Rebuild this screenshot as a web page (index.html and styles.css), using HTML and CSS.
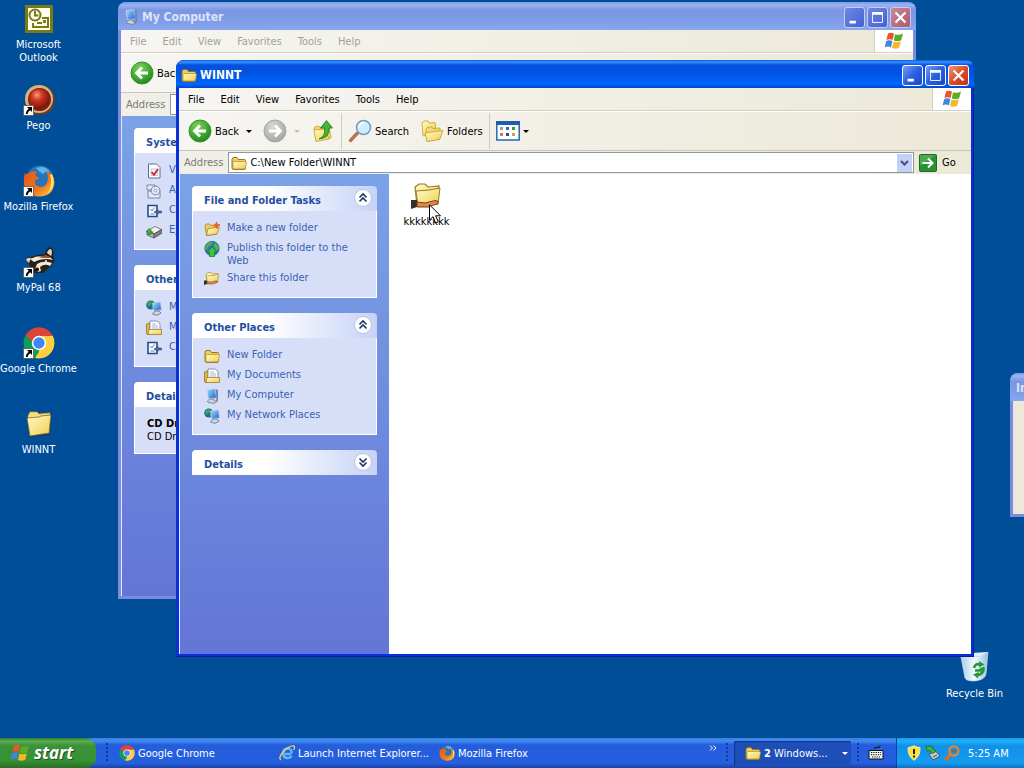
FILE: index.html
```html
<!DOCTYPE html>
<html lang="en">
<head>
    <meta charset="UTF-8">
    <meta name="viewport" content="width=device-width, initial-scale=1.0">
    <title>Desktop</title>
    <link rel="stylesheet" href="styles.css">
</head>
<body>
    <!-- Shared icons -->
    <svg class="defs" aria-hidden="true">
        <defs>
            <linearGradient id="g-folder" x1="0" y1="0" x2="1" y2="1">
                <stop offset="0" stop-color="#fffbc4"/><stop offset="1" stop-color="#f2cd52"/>
            </linearGradient>
            <radialGradient id="g-green" cx=".4" cy=".3" r=".7">
                <stop offset="0" stop-color="#7fd85a"/><stop offset="1" stop-color="#1f8a1a"/>
            </radialGradient>
            <radialGradient id="g-gray" cx=".4" cy=".3" r=".7">
                <stop offset="0" stop-color="#d8d8d6"/><stop offset="1" stop-color="#a5a5a3"/>
            </radialGradient>
            <radialGradient id="g-red" cx=".4" cy=".3" r=".7">
                <stop offset="0" stop-color="#f59a82"/><stop offset=".4" stop-color="#cf3420"/><stop offset="1" stop-color="#7a140c"/>
            </radialGradient>
            <linearGradient id="g-screen" x1="0" y1="0" x2="1" y2="1">
                <stop offset="0" stop-color="#a6dcff"/><stop offset="1" stop-color="#1668cc"/>
            </linearGradient>
            <linearGradient id="g-fox" x1="0" y1="0" x2="1" y2="1">
                <stop offset="0" stop-color="#e2541b"/><stop offset=".6" stop-color="#f0791c"/><stop offset="1" stop-color="#ffd84a"/>
            </linearGradient>
            <linearGradient id="g-bin" x1="0" y1="0" x2="1" y2="0">
                <stop offset="0" stop-color="#a9cdea"/><stop offset=".5" stop-color="#f4faff"/><stop offset="1" stop-color="#9bbfe0"/>
            </linearGradient>
        </defs>
        <symbol id="folder" viewBox="0 0 16 16">
            <path d="M1 4.5Q1 2.500 3 2.500H6L7.500 4.500H13.500Q14.500 4.500 14.500 5.500V13Q14.500 14.500 13 14.500H3Q1 14.500 1 13Z" fill="#f0d05c" stroke="#97721a"/>
            <path d="M2 7.500Q2 6.500 3 6.500H14.500Q15.500 6.500 15.500 7.500L14.500 13Q14.300 14 13 14H3Q2 14 2 13Z" fill="url(#g-folder)" stroke="#b58a22" stroke-width=".7"/>
        </symbol>
        <symbol id="folder-big" viewBox="0 0 32 32">
            <path d="M7 7L9 4L16 3L18 6L29 5L27 27L8 29Z" fill="#222" opacity=".35"/>
            <path d="M5 8L7 4L14 4L16 6L27 5L26 25L7 27Z" fill="#f5dc80" stroke="#c9a238" stroke-width=".7"/>
            <path d="M4 10L16 9L18 8L28 7L26 25L7 28Z" fill="url(#g-folder)" stroke="#6d5a20" stroke-width=".7"/>
        </symbol>
        <symbol id="hand" viewBox="0 0 16 16">
            <path d="M0 9.500L3 9.500L3 13L0 14Z" fill="#33302e"/>
            <path d="M3 10.500L7 11L12 9.800Q14.500 10 13 11.400L9 13L3 13Z" fill="#e08a4a" stroke="#7b3f18" stroke-width=".5"/>
        </symbol>
        <symbol id="shared" viewBox="0 0 16 16">
            <path d="M2 3L4 1.500H7L8.500 3L14 2.500L13.500 11.500L3 12Z" fill="url(#g-folder)" stroke="#9c7a22" stroke-width=".6"/>
            <path d="M2.500 5L9 4.500L14.500 3.500L13.500 11.500L3.500 12.500Z" fill="url(#g-folder)" stroke="#9c7a22" stroke-width=".5"/>
            <use href="#hand"/>
        </symbol>
        <symbol id="new-folder" viewBox="0 0 16 16">
            <path d="M1 5L2 3H6L7 4.500L12 4L13 13L2.500 14.500Z" fill="#f1cd5d" stroke="#a2761f" stroke-width=".7"/>
            <path d="M4 7.500L15.500 6L13 13L2.500 14.500Z" fill="url(#g-folder)" stroke="#a2761f" stroke-width=".7"/>
            <path d="M12.500 1L13.300 3.400L16 4L13.600 5L13 7.600L11.800 5.200L9 4.600L11.600 3.500Z" fill="#e8622a" stroke="#e8622a"/>
        </symbol>
        <symbol id="globe" viewBox="0 0 16 16">
            <circle cx="8" cy="7.500" r="7.200" fill="#2a77b8" stroke="#1b4f7c" stroke-width=".6"/>
            <path d="M2 4Q5 0 9 1L7 4L4 6L3 9L1 8ZM10 2Q14 3 15 7L13 10L10 6Z" fill="#53b04b"/>
            <path d="M8 6L13 11H10.500V15.500H5.500V11H3Z" fill="#3cc43a" stroke="#157a1a" stroke-width=".7"/>
        </symbol>
        <symbol id="documents" viewBox="0 0 16 16">
            <path d="M.5 4L4 3V14.500H2Q.5 14.500.5 13Z" fill="#e6b93f" stroke="#96711a" stroke-width=".8"/>
            <path d="M4 1H11L14 3.500V11H4Z" fill="#fff" stroke="#6f7ea8" stroke-width=".8"/>
            <path d="M6 4H10M6 6H12M6 8H12" stroke="#93a4cc" stroke-width=".8"/>
            <path d="M3 9.500H15.500V14.500H2Z" fill="url(#g-folder)" stroke="#96711a" stroke-width=".7"/>
        </symbol>
        <symbol id="computer" viewBox="0 0 16 16">
            <path d="M3 1.500L11 .8L12.600 10L4.400 10.600Z" fill="url(#g-screen)" stroke="#c9d6ea" stroke-width=".8"/>
            <path d="M11.500 1L14 2V13L12.600 14Z" fill="#6f86b4"/>
            <path d="M6 11H10V12.500L13 13.400L10 15.400L4 14.400L3.400 13Z" fill="#cdd3df" stroke="#5b6880" stroke-width=".7"/>
        </symbol>
        <symbol id="network" viewBox="0 0 16 16">
            <circle cx="4.800" cy="5" r="4.600" fill="#1d66b0"/>
            <path d="M1 3Q4 0 7 2L5 5L2 7ZM5 7L8 5V9Z" fill="#3cab38"/>
            <path d="M6.500 3L14.500 2L15.400 10L7.600 10.800Z" fill="url(#g-screen)" stroke="#b9c8e2" stroke-width=".8"/>
            <path d="M9 11L13 11L15 13L11 15.400L6.500 14Z" fill="#cfd5e0" stroke="#54627c" stroke-width=".7"/>
        </symbol>
        <symbol id="checklist" viewBox="0 0 16 16">
            <path d="M2.500 1H10.500L14 4.500V15H2.500Z" fill="#fff" stroke="#5c6c92"/>
            <path d="M5 6H11.500V12.500H5Z" fill="#f2f4fa" stroke="#a9b4cf" stroke-width=".7"/>
            <path d="M5.500 9L8 11.800L12 6" fill="none" stroke="#d8222c" stroke-width="1.800"/>
        </symbol>
        <symbol id="programs" viewBox="0 0 16 16">
            <path d="M1 2H9V7H1ZM2 8H14V15H2Z" fill="#e4e9f2" stroke="#6f7e9a" stroke-width=".9"/>
            <circle cx="9.500" cy="7.500" r="4.400" fill="#dfe8f5" stroke="#6f84ac"/>
            <circle cx="9.500" cy="7.500" r="1.300" fill="#fff" stroke="#6f84ac" stroke-width=".7"/>
        </symbol>
        <symbol id="settings" viewBox="0 0 16 16">
            <path d="M2 2.500H11V13.500H2Z" fill="#f5f8ff" stroke="#254b85" stroke-width="1.600"/>
            <path d="M4 6L6 8L8.500 4.500M4.500 11H8.500" fill="none" stroke="#5f86bd"/>
            <path d="M8 9L12 6.500V8H15.500V10H12V11.500Z" fill="#4a6b9c" stroke="#223b62" stroke-width=".5"/>
        </symbol>
        <symbol id="drive" viewBox="0 0 16 16">
            <path d="M1 8L9 3.500L15.500 6.500L8 11Z" fill="#f0f0ee" stroke="#555" stroke-width=".7"/>
            <path d="M1 8L8 11V15L1 12Z" fill="#b9bab8" stroke="#444" stroke-width=".7"/>
            <path d="M8 11L15.500 6.500V10.500L8 15Z" fill="#7f8180" stroke="#444" stroke-width=".7"/>
            <path d="M0 8.600L3.500 5.500L7 9.500H5V11.500H2V9Z" fill="#3fb53a" stroke="#14701a" stroke-width=".6"/>
        </symbol>
        <symbol id="back" viewBox="0 0 24 24">
            <circle cx="12" cy="12" r="11" fill="url(#g-green)" stroke="#3a8f30"/>
            <path d="M18 12H7M12 6.500L6.500 12L12 17.500" fill="none" stroke="#fff" stroke-width="2.800"/>
        </symbol>
        <symbol id="forward" viewBox="0 0 24 24">
            <circle cx="12" cy="12" r="11" fill="url(#g-gray)" stroke="#a6a6a4"/>
            <path d="M6 12H17M12 6.500L17.500 12L12 17.500" fill="none" stroke="#fff" stroke-width="2.800"/>
        </symbol>
        <symbol id="up" viewBox="0 0 24 24">
            <path d="M3 9L5 7L9 8L10 10L18 6L20 19L5 22Z" fill="#f0d670" stroke="#c9a12c" stroke-width=".8"/>
            <path d="M3 11L14 10L18 20L5 22.500Z" fill="url(#g-folder)" stroke="#c9a12c" stroke-width=".8"/>
            <path d="M8 20Q15 17 13.500 9H9.500L15.500 1.500L21.500 9H18Q19 19 8 20Z" fill="#45b436" stroke="#1c7a1a" stroke-width=".8"/>
        </symbol>
        <symbol id="search" viewBox="0 0 24 24">
            <path d="M9.500 14L2.500 21.500" stroke="#b5764f" stroke-width="3.400" stroke-linecap="round"/>
            <circle cx="15.500" cy="8.500" r="7" fill="#cdeefb" stroke="#7896bd" stroke-width="1.500"/>
            <path d="M11 8Q12 4 16 3.600" fill="none" stroke="#fff" stroke-width="1.800"/>
        </symbol>
        <symbol id="folders" viewBox="0 0 24 24">
            <path d="M2 4L4 2L8 2L9 4L15 3.500L16 14L3 17Z" fill="url(#g-folder)" stroke="#c49a2a" stroke-width=".8"/>
            <path d="M6 10L8 8L12 8L13 9.500L20 9L20 20L7 22Z" fill="#f3d873" stroke="#c49a2a" stroke-width=".8"/>
            <path d="M5 14L14 12.500L23 11.500L19.500 20.500L7 22.500Z" fill="url(#g-folder)" stroke="#c49a2a" stroke-width=".8"/>
        </symbol>
        <symbol id="views" viewBox="0 0 24 20">
            <path d="M.8 1H23.200V19H.8Z" fill="#fff" stroke="#1f6ab2" stroke-width="1.500"/>
            <path d="M0 0H24V4H0Z" fill="#1c5fae"/>
            <path d="M4 6H7V9H4Z" fill="#8c9bc0"/><path d="M10 6H13V9H10Z" fill="#3d67b0"/><path d="M16 6H19V9H16Z" fill="#3a9a3c"/>
            <path d="M4 12H7V15H4Z" fill="#e0704a"/><path d="M10 12H13V15H10Z" fill="#1c4ea6"/><path d="M16 12H19V15H16Z" fill="#c9a24a"/>
        </symbol>
        <symbol id="go" viewBox="0 0 18 18">
            <rect x=".5" y=".5" width="17" height="17" rx="1" fill="#289134" stroke="#1b6b26"/>
            <path d="M1 1H17L1 12Z" fill="#59b85c" opacity=".7"/>
            <path d="M3.500 9H13M9 4.500L13.500 9L9 13.500" fill="none" stroke="#fff" stroke-width="2"/>
        </symbol>
        <symbol id="flag" viewBox="0 0 20 18">
            <path d="M4 1.600Q7 0 10 1.800L8.600 8Q5.600 6.400 2.400 8Z" fill="#e8552b"/>
            <path d="M11 2.200Q14.500 3.600 19 1.600L17.200 8.200Q13.500 10 9.800 8.400Z" fill="#5cab2c"/>
            <path d="M2.200 9Q5.400 7.400 8.400 9L7 15.400Q4 13.800.6 15.400Z" fill="#3f86dc"/>
            <path d="M9.500 9.500Q13 11 16.900 9.300L15.200 15.800Q11.500 17.600 8 15.900Z" fill="#f3b92a"/>
        </symbol>
        <symbol id="chrome" viewBox="0 0 32 32">
            <path d="M16 16L2.600 8.300A15.500 15.500 0 0 1 29.400 8.300Z" fill="#db4437"/>
            <path d="M16 16L29.400 8.300A15.500 15.500 0 0 1 16 31.500Z" fill="#ffcd40"/>
            <path d="M16 16L16 31.500A15.500 15.500 0 0 1 2.600 8.300Z" fill="#0f9d58"/>
            <path d="M16 9H29.800L30.500 12L22 18Z" fill="#ffcd40"/>
            <path d="M2.600 8.300L10 20L16 9Z" fill="#0f9d58"/>
            <path d="M2.600 8.300A15.500 15.500 0 0 1 29.800 9H16L9.500 15Z" fill="#db4437"/>
            <path d="M22 19L16 31.500L12 31L18 22Z" fill="#ffcd40"/>
            <circle cx="16" cy="16" r="7.200" fill="#fff"/>
            <circle cx="16" cy="16" r="5.700" fill="#4285f4"/>
        </symbol>
        <symbol id="firefox" viewBox="0 0 32 32">
            <circle cx="17" cy="14" r="13.500" fill="#2775b8"/>
            <path d="M13 3Q22 0 27 7Q22 6 20 9Q15 6 13 3Z" fill="#5fb4e4"/>
            <path d="M2 8Q3 10 5 8.500Q9 5 14 7Q12 9 12.500 11L16 13Q15 15 12 15Q11 21 17 22Q24 22 25 14Q25 9 23 6Q31 9 31.500 17Q31 31 16 31.500Q3 31 1 19Q.5 12 2 8Z" fill="url(#g-fox)"/>
            <path d="M29 9Q34 20 25 28Q30 19 27 10Z" fill="#ffe36a"/>
        </symbol>
        <symbol id="raccoon" viewBox="0 0 32 32">
            <path d="M3 14Q3 10 8 11L14 9L22 8Q23 2 28 1Q32 5 30 10Q33 15 28 20L20 27L10 27L6 18Z" fill="#2c1d16"/>
            <path d="M3 14Q4 11 8 12L6 17ZM24 7Q25 3 28 3Q30 6 28 10Z" fill="#ded2bc"/>
            <path d="M7 13Q16 8 27 11L30 14Q20 11 11 16ZM14 18Q20 14 29 17L27 20Q22 17 17 21L18 25Q13 27 12 23Z" fill="#f3ead6"/>
            <path d="M15 11L23 9L28 12L20 12Z" fill="#8c5a38"/>
            <circle cx="14" cy="23.500" r="2" fill="#111"/>
            <circle cx="23" cy="15" r="1" fill="#fff"/>
        </symbol>
        <symbol id="outlook" viewBox="0 0 32 32">
            <path d="M2 2H30V30H2Z" fill="#7a7a14"/>
            <path d="M5 5H27V27H5Z" fill="#fffff0"/>
            <g fill="none" stroke="#7a7a14" stroke-width="2">
                <circle cx="12" cy="12" r="5.500"/><path d="M12 8V12.500H15.500M10 20V24H25V15H19M14 20H19"/>
            </g>
            <path d="M20 17H23V20H20Z" fill="#7a7a14"/>
        </symbol>
        <symbol id="pego" viewBox="0 0 32 32">
            <circle cx="17" cy="16" r="15" fill="#6d3c1e"/>
            <circle cx="16" cy="15" r="14" fill="#d9b27c"/>
            <circle cx="16.500" cy="15.500" r="11.500" fill="#7b2415"/>
            <circle cx="16" cy="15" r="10" fill="url(#g-red)"/>
        </symbol>
        <symbol id="bin" viewBox="0 0 32 32">
            <path d="M2 5L22 4L29 0L27 22Q26 28 15 29Q7 29 6 26Z" fill="url(#g-bin)" stroke="#d8ecfa" stroke-width=".6"/>
            <path d="M2 5L22 4L29 0L12 1Z" fill="#dff0fc"/>
            <g fill="none" stroke="#239b32" stroke-width="2.600">
                <path d="M15 16Q16 11 21 12.500M24.500 15Q25 22 19 23M16 18.500H21L23 16"/>
            </g>
            <path d="M20 9L25.500 12.500L20 15.500ZM20 20L14 22.500L19 26.500Z" fill="#239b32"/>
        </symbol>
        <symbol id="shortcut" viewBox="0 0 11 11">
            <path d="M.5.500H10.500V10.500H.5Z" fill="#fff" stroke="#555" stroke-width=".8"/>
            <path d="M4 2H9V7L7.300 5.300Q5 6.500 4.600 9H2.800Q3 5.500 5.700 3.800Z" fill="#000"/>
        </symbol>
        <symbol id="ie" viewBox="0 0 16 16">
            <path d="M12.500 9H5.500M12.800 8.300Q12.500 3.500 8.500 3.500Q4 4 4 8.500Q4.500 13 8.500 13Q11.500 13 12.500 11" fill="none" stroke="#5ab8f4" stroke-width="2.400"/>
            <path d="M2 15Q-1 13 4 7Q11 0 15 1Q16.500 2 14.500 5" fill="none" stroke="#f1d067" stroke-width="1.300"/>
        </symbol>
        <symbol id="keyboard" viewBox="0 0 16 16">
            <path d="M6 4Q6 2 9 2.500T12 .5" fill="none" stroke="#111"/>
            <path d="M1 5.500H15V14H1Z" fill="#f4f4f4" stroke="#111"/>
            <path d="M3 7.500H13M3 9.700H13M4 12H12" stroke="#111" stroke-dasharray="1.300 1"/>
        </symbol>
        <symbol id="shield" viewBox="0 0 16 16">
            <path d="M8 .7Q11 2.500 14 2.500Q14.500 11 8 15.300Q1.500 11 2 2.500Q5 2.500 8 .7Z" fill="#ffe32e" stroke="#e9e6d0"/>
            <path d="M8 4V9M8 10.500V12.500" stroke="#222" stroke-width="2"/>
        </symbol>
        <symbol id="safe-remove" viewBox="0 0 16 16">
            <path d="M4 9L11 6.500L15 11L8 15Z" fill="#c9cdc9" stroke="#444" stroke-width=".8"/>
            <path d="M8 12L12 10" stroke="#444"/>
            <path d="M1 1L8 1.500L6.500 3L11 6L8 8.500L4 5L2.500 6.500Z" fill="#43b93c" stroke="#13661a" stroke-width=".7"/>
        </symbol>
        <symbol id="magnify" viewBox="0 0 16 16">
            <path d="M6.500 9.500L2 14" stroke="#d9711c" stroke-width="3.200" stroke-linecap="round"/>
            <circle cx="9.800" cy="6" r="4.600" fill="none" stroke="#e9842a" stroke-width="2.200"/>
            <circle cx="9.800" cy="6" r="1.600" fill="#b65612"/>
        </symbol>
        <symbol id="minimize" viewBox="0 0 21 21"><path d="M5 14H12V17H5Z" fill="#fff"/></symbol>
        <symbol id="maximize" viewBox="0 0 21 21">
            <path d="M5 6H16V16H5Z" fill="none" stroke="#fff"/><path d="M4.500 4.500H16.500V7.500H4.500Z" fill="#fff"/>
        </symbol>
        <symbol id="close" viewBox="0 0 21 21"><path d="M5 5L16 16M16 5L5 16" stroke="#fff" stroke-width="2.400"/></symbol>
        <symbol id="chevrons" viewBox="0 0 18 18">
            <circle cx="9" cy="9" r="8.500" fill="#fff" stroke="#b9c3e0"/>
            <path d="M5.500 8.500L9 5L12.500 8.500M5.500 12.500L9 9L12.500 12.500" fill="none" stroke="#1c3468" stroke-width="1.600"/>
        </symbol>
    </svg>

    <main class="desktop">
        <nav class="shortcuts">
            <a class="shortcut" href="#"><svg><use href="#outlook"/></svg><span>Microsoft Outlook</span></a>
            <a class="shortcut" href="#"><svg><use href="#pego"/></svg><svg class="arrow"><use href="#shortcut"/></svg><span>Pego</span></a>
            <a class="shortcut" href="#"><svg><use href="#firefox"/></svg><svg class="arrow"><use href="#shortcut"/></svg><span>Mozilla Firefox</span></a>
            <a class="shortcut" href="#"><svg><use href="#raccoon"/></svg><svg class="arrow"><use href="#shortcut"/></svg><span>MyPal 68</span></a>
            <a class="shortcut" href="#"><svg><use href="#chrome"/></svg><svg class="arrow"><use href="#shortcut"/></svg><span>Google Chrome</span></a>
            <a class="shortcut" href="#"><svg><use href="#folder-big"/></svg><span>WINNT</span></a>
        </nav>
        <a class="shortcut recycle" href="#"><svg><use href="#bin"/></svg><span>Recycle Bin</span></a>

        <!-- My Computer -->
        <section class="window inactive my-computer">
            <header class="titlebar">
                <svg class="icon"><use href="#computer"/></svg>
                <h2>My Computer</h2>
                <button class="control" aria-label="Minimize"><svg><use href="#minimize"/></svg></button>
                <button class="control" aria-label="Maximize"><svg><use href="#maximize"/></svg></button>
                <button class="control close" aria-label="Close"><svg><use href="#close"/></svg></button>
            </header>
            <div class="frame">
                <div class="menubar">
                    <button>File</button><button>Edit</button><button>View</button><button>Favorites</button><button>Tools</button><button>Help</button>
                    <div class="throbber"><svg><use href="#flag"/></svg></div>
                </div>
                <div class="toolbar">
                    <button><svg><use href="#back"/></svg>Back</button>
                </div>
                <div class="addressbar">
                    <label for="address-computer">Address</label>
                    <div class="address"><input id="address-computer" type="text"></div>
                </div>
                <div class="content">
                    <aside class="sidebar">
                        <section class="panel">
                            <h3>System Tasks</h3>
                            <ul>
                                <li><a href="#"><svg class="icon"><use href="#checklist"/></svg>View</a></li>
                                <li><a href="#"><svg class="icon"><use href="#programs"/></svg>Add</a></li>
                                <li><a href="#"><svg class="icon"><use href="#settings"/></svg>Change</a></li>
                                <li><a href="#"><svg class="icon"><use href="#drive"/></svg>Eject</a></li>
                            </ul>
                        </section>
                        <section class="panel">
                            <h3>Other Places</h3>
                            <ul>
                                <li><a href="#"><svg class="icon"><use href="#network"/></svg>My Network</a></li>
                                <li><a href="#"><svg class="icon"><use href="#documents"/></svg>My Documents</a></li>
                                <li><a href="#"><svg class="icon"><use href="#settings"/></svg>Control</a></li>
                            </ul>
                        </section>
                        <section class="panel">
                            <h3>Details</h3>
                            <p class="details"><b>CD Drive</b><br>CD Drive</p>
                        </section>
                    </aside>
                    <div class="files"></div>
                </div>
            </div>
        </section>

        <!-- Window partly off the right edge -->
        <section class="window inactive offscreen">
            <header class="titlebar"><h2>In</h2></header>
            <div class="frame"></div>
        </section>

        <!-- WINNT -->
        <section class="window winnt">
            <header class="titlebar">
                <svg class="icon"><use href="#folder"/></svg>
                <h2>WINNT</h2>
                <button class="control" aria-label="Minimize"><svg><use href="#minimize"/></svg></button>
                <button class="control" aria-label="Maximize"><svg><use href="#maximize"/></svg></button>
                <button class="control close" aria-label="Close"><svg><use href="#close"/></svg></button>
            </header>
            <div class="frame">
                <div class="menubar">
                    <button>File</button><button>Edit</button><button>View</button><button>Favorites</button><button>Tools</button><button>Help</button>
                    <div class="throbber"><svg><use href="#flag"/></svg></div>
                </div>
                <div class="toolbar">
                    <button class="drop"><svg><use href="#back"/></svg>Back</button>
                    <button class="drop" disabled aria-label="Forward"><svg><use href="#forward"/></svg></button>
                    <button aria-label="Up"><svg><use href="#up"/></svg></button>
                    <span class="separator"></span>
                    <button><svg><use href="#search"/></svg>Search</button>
                    <button><svg><use href="#folders"/></svg>Folders</button>
                    <span class="separator"></span>
                    <button class="drop views" aria-label="Views"><svg><use href="#views"/></svg></button>
                </div>
                <div class="addressbar">
                    <label for="address-winnt">Address</label>
                    <div class="address">
                        <svg class="icon"><use href="#folder"/></svg>
                        <input id="address-winnt" type="text" value="C:\New Folder\WINNT">
                        <button aria-label="Show addresses"><svg viewBox="0 0 15 18"><path d="M4 7L7.500 10.500L11 7" fill="none" stroke="#42557f" stroke-width="2.200"/></svg></button>
                    </div>
                    <button class="go"><svg><use href="#go"/></svg>Go</button>
                </div>
                <div class="content">
                    <aside class="sidebar">
                        <section class="panel">
                            <h3>File and Folder Tasks <button aria-label="Collapse"><svg><use href="#chevrons"/></svg></button></h3>
                            <ul>
                                <li><a href="#"><svg class="icon"><use href="#new-folder"/></svg>Make a new folder</a></li>
                                <li><a href="#"><svg class="icon"><use href="#globe"/></svg>Publish this folder to the Web</a></li>
                                <li><a href="#"><svg class="icon"><use href="#shared"/></svg>Share this folder</a></li>
                            </ul>
                        </section>
                        <section class="panel">
                            <h3>Other Places <button aria-label="Collapse"><svg><use href="#chevrons"/></svg></button></h3>
                            <ul>
                                <li><a href="#"><svg class="icon"><use href="#folder"/></svg>New Folder</a></li>
                                <li><a href="#"><svg class="icon"><use href="#documents"/></svg>My Documents</a></li>
                                <li><a href="#"><svg class="icon"><use href="#computer"/></svg>My Computer</a></li>
                                <li><a href="#"><svg class="icon"><use href="#network"/></svg>My Network Places</a></li>
                            </ul>
                        </section>
                        <section class="panel closed">
                            <h3>Details <button aria-label="Expand"><svg><use href="#chevrons"/></svg></button></h3>
                        </section>
                    </aside>
                    <div class="files">
                        <a class="file" href="#"><svg><use href="#shared"/></svg><span>kkkkkkkk</span></a>
                    </div>
                </div>
            </div>
        </section>

        <svg class="cursor" viewBox="0 0 13 20">
            <path d="M.5.800V16L4 12.700L6.700 19L9.300 17.900L6.600 11.800H11.500Z" fill="#fff" stroke="#000"/>
        </svg>
    </main>

    <footer class="taskbar">
        <button class="start"><svg><use href="#flag"/></svg>start</button>
        <nav class="quick">
            <span class="grip"></span>
            <a href="#"><svg class="icon"><use href="#chrome"/></svg>Google Chrome</a>
            <a href="#"><svg class="icon"><use href="#ie"/></svg>Launch Internet Explorer...</a>
            <a href="#"><svg class="icon"><use href="#firefox"/></svg>Mozilla Firefox</a>
        </nav>
        <button class="more" aria-label="More"><svg viewBox="0 0 8 6"><path d="M1 .5L3.500 3L1 5.500M4.500.500L7 3L4.500 5.500" fill="none" stroke="#fff"/></svg></button>
        <span class="grip"></span>
        <button class="task drop"><svg class="icon"><use href="#folder"/></svg><span><b>2</b> Windows...</span></button>
        <span class="grip"></span>
        <button class="language" aria-label="Keyboard"><svg class="icon"><use href="#keyboard"/></svg></button>
        <div class="tray">
            <svg class="icon"><use href="#shield"/></svg>
            <svg class="icon"><use href="#safe-remove"/></svg>
            <svg class="icon"><use href="#magnify"/></svg>
            <time>5:25 AM</time>
        </div>
    </footer>
</body>
</html>
```
FILE: styles.css
```css
* {
    box-sizing: border-box;
}
body {
    margin: 0;
    height: 100vh;
    display: flex;
    flex-direction: column;
    overflow: hidden;
    font: 11px/13px Tahoma, "DejaVu Sans Condensed", "DejaVu Sans", sans-serif;
    color: #000;
}
button {
    font: inherit;
    color: inherit;
    border: 0;
    padding: 0;
    background: none;
    display: flex;
    align-items: center;
}
a {
    color: inherit;
    text-decoration: none;
}
h2, h3, ul, p {
    margin: 0;
    padding: 0;
}
svg {
    display: block;
    flex: none;
}
.defs {
    position: absolute;
    width: 0;
    height: 0;
}
.icon {
    width: 16px;
    height: 16px;
}

/* Desktop */
.desktop {
    flex: 1;
    position: relative;
    overflow: hidden;
    background: #004e98;
}
.shortcuts {
    display: grid;
    grid-auto-rows: 81px;
    width: 77px;
    padding-top: 3px;
}
.shortcut {
    display: flex;
    flex-direction: column;
    align-items: center;
    gap: 3px;
    position: relative;
    width: 77px;
    color: #fff;
    text-align: center;
}
.shortcut svg {
    width: 32px;
    height: 32px;
}
.shortcut .arrow {
    position: absolute;
    left: 23px;
    top: 21px;
    width: 11px;
    height: 11px;
}
.recycle {
    position: absolute;
    right: 11px;
    bottom: 38px;
}
.cursor {
    position: absolute;
    left: 429px;
    top: 204px;
    width: 13px;
    height: 20px;
}

/* Windows */
.window {
    position: absolute;
    display: flex;
    flex-direction: column;
    border-radius: 8px 8px 0 0;
    background: #0831d9;
    box-shadow: inset -1px -1px #001ea0;
    overflow: hidden;
}
.my-computer {
    left: 118px;
    right: 108px;
    top: 2px;
    bottom: 139px;
}
.winnt {
    left: 176px;
    right: 50px;
    top: 60px;
    bottom: 81px;
}
.offscreen {
    left: 1010px;
    width: 300px;
    top: 373px;
    height: 144px;
}
.titlebar {
    height: 28px;
    flex: none;
    display: flex;
    align-items: center;
    gap: 2px;
    padding: 2px 5px 0 5px;
    background: linear-gradient(#0058e6, #3a93ff 2px, #0550dd 5px, #0054e4 14px, #0066ff 24px, #0046cc);
    color: #fff;
}
.titlebar h2 {
    flex: 1;
    padding-left: 1px;
    font: bold 12px/16px "Trebuchet MS", "DejaVu Sans Condensed", "DejaVu Sans", sans-serif;
}
.control {
    width: 21px;
    height: 21px;
    border: 1px solid #fff;
    border-radius: 3px;
    background: linear-gradient(135deg, #7aa0f5, #2a5fe0 50%, #1c48c4);
}
.control svg {
    width: 19px;
    height: 19px;
}
.control.close {
    background: linear-gradient(135deg, #f0997c, #dd4a26 50%, #c23511);
}
.frame {
    flex: 1;
    min-height: 0;
    display: flex;
    flex-direction: column;
    margin: 0 3px 3px;
    background: #ece9d8;
}
.inactive {
    background: #7a8be0;
    box-shadow: none;
}
.inactive .titlebar {
    background: linear-gradient(#8096e0, #9db4f2 3px, #7b95e2 8px, #7f9ee8 20px, #8aa6ee);
    color: #dbe4f8;
}
.inactive .control {
    border-color: #c0cdf4;
    background: linear-gradient(135deg, #6f88e4, #4560d0);
}
.inactive .control.close {
    background: linear-gradient(135deg, #c78a9c, #b0566c);
}

/* Bars */
.menubar {
    display: flex;
    height: 23px;
    padding-left: 1px;
    background: linear-gradient(90deg, #f6f5f2, #ece9d8);
    border-bottom: 1px solid #d3cfbd;
}
.menubar button {
    padding: 0 8px;
}
.inactive .menubar {
    color: #a3a295;
}
.throbber {
    margin-left: auto;
    width: 39px;
    display: grid;
    place-items: center;
    background: #fff;
    border-left: 1px solid #d3cfbd;
}
.throbber svg {
    width: 20px;
    height: 18px;
}
.toolbar {
    display: flex;
    align-items: center;
    gap: 11px;
    height: 40px;
    padding-left: 9px;
    background: linear-gradient(90deg, #f6f5f2, #ece9d8);
    border-top: 1px solid #fff;
    border-bottom: 1px solid #cbc7b5;
}
.toolbar button {
    gap: 3px;
}
.toolbar svg {
    width: 24px;
    height: 24px;
}
.toolbar .views svg {
    height: 20px;
}
.drop::after {
    content: "";
    border: 3px solid transparent;
    border-top-color: currentColor;
    border-bottom: 0;
    margin-left: 4px;
}
.toolbar .views::after {
    margin-left: 0;
}
.drop:disabled {
    color: #c1bfb4;
}
.separator {
    width: 1px;
    height: 36px;
    margin: 0 -5px;
    background: #cfccbd;
}
.addressbar {
    display: flex;
    align-items: center;
    gap: 5px;
    height: 23px;
    padding-left: 5px;
    background: linear-gradient(90deg, #f0efe8, #ece9d8);
    color: #7c7b73;
}
.address {
    flex: 1;
    display: flex;
    align-items: center;
    gap: 3px;
    height: 21px;
    padding: 0 1px 0 2px;
    border: 1px solid #8c979f;
    background: #fff;
}
.address input {
    flex: 1;
    min-width: 0;
    border: 0;
    padding: 0;
    outline: 0;
    background: none;
    font: inherit;
    color: #000;
}
.address button svg {
    width: 15px;
    height: 18px;
    background: #c3d0f8;
}
.go {
    gap: 5px;
    width: 52px;
    color: #000;
}
.go svg {
    width: 18px;
    height: 18px;
}

/* Contents */
.content {
    flex: 1;
    min-height: 0;
    display: flex;
    border-left: 1px solid #e4ebfb;
}
.sidebar {
    width: 209px;
    flex: none;
    display: flex;
    flex-direction: column;
    gap: 15px;
    padding: 12px;
    background: linear-gradient(#7ba2e7, #6375d6);
    overflow: hidden;
}
.panel h3 {
    display: flex;
    align-items: center;
    justify-content: space-between;
    height: 25px;
    padding: 3px 5px 0 12px;
    border-radius: 4px 4px 0 0;
    background: linear-gradient(90deg, #fff 40%, #c6d3f7);
    font-size: 11px;
    color: #1f4fa0;
}
.panel h3 svg {
    width: 18px;
    height: 18px;
    margin-bottom: 4px;
}
.closed h3 svg {
    transform: rotate(180deg);
}
.panel ul,
.details {
    padding: 10px 12px;
    border: 1px solid #fff;
    border-top: 0;
    background: #d6dff7;
}
.panel ul {
    display: grid;
    gap: 4px;
    list-style: none;
    color: #3a5fb4;
}
.panel li a {
    display: flex;
    gap: 7px;
    min-height: 16px;
    margin-left: -1px;
}
.inactive .panel li {
    white-space: nowrap;
}
.files {
    flex: 1;
    padding: 7px 0;
    background: #fff;
}
.file {
    display: flex;
    flex-direction: column;
    align-items: center;
    gap: 2px;
    width: 75px;
}
.file svg {
    width: 32px;
    height: 32px;
}

/* Taskbar */
.taskbar {
    display: flex;
    align-items: center;
    height: 30px;
    flex: none;
    background: linear-gradient(#3a80e8, #3f8cf0 3px, #245cdc 7px, #2560de 25px, #1941a5);
    color: #fff;
}
.taskbar > * {
    flex: none;
}
.start {
    align-self: stretch;
    width: 96px;
    gap: 4px;
    padding-left: 10px;
    border-radius: 0 10px 10px 0;
    background: linear-gradient(#2f7d2c, #5aae54 3px, #3b9138 8px, #379335 22px, #2a6e27);
    font: italic bold 17px/20px "Franklin Gothic Medium", "Open Sans", sans-serif;
    text-shadow: 1px 1px 1px #1c4d1b;
}
.start svg {
    width: 20px;
    height: 18px;
}
.grip {
    flex: none;
    width: 4px;
    height: 20px;
    margin: 0 4px 0 6px;
    background: radial-gradient(circle at 1px 1px, #12399c 1px, transparent 1px) 0 0 / 4px 4px;
}
.taskbar .quick {
    flex: 1;
    display: flex;
    align-items: center;
    padding-left: 4px;
}
.quick .grip {
    margin-right: 9px;
}
.quick a {
    display: flex;
    align-items: center;
    gap: 3px;
    width: 160px;
    white-space: nowrap;
}
.more {
    align-self: flex-start;
    margin-right: 3px;
    padding-top: 7px;
}
.more svg {
    width: 8px;
    height: 6px;
}
.task {
    width: 117px;
    height: 25px;
    gap: 3px;
    padding: 0 3px 0 11px;
    border-radius: 2px;
    background: #1e4eb8;
    box-shadow: inset 1px 1px 1px #12348a;
}
.task span {
    flex: 1;
    text-align: left;
}
.language {
    width: 31px;
    padding-left: 3px;
}
.tray {
    align-self: stretch;
    display: flex;
    align-items: center;
    gap: 3px;
    width: 128px;
    padding-left: 9px;
    border-left: 1px solid #0b3fae;
    background: linear-gradient(#1a9cf0, #1fb0f6 3px, #1290e8 8px, #159bef 25px, #0d6fc0);
}
.tray time {
    margin-left: 5px;
}
```
